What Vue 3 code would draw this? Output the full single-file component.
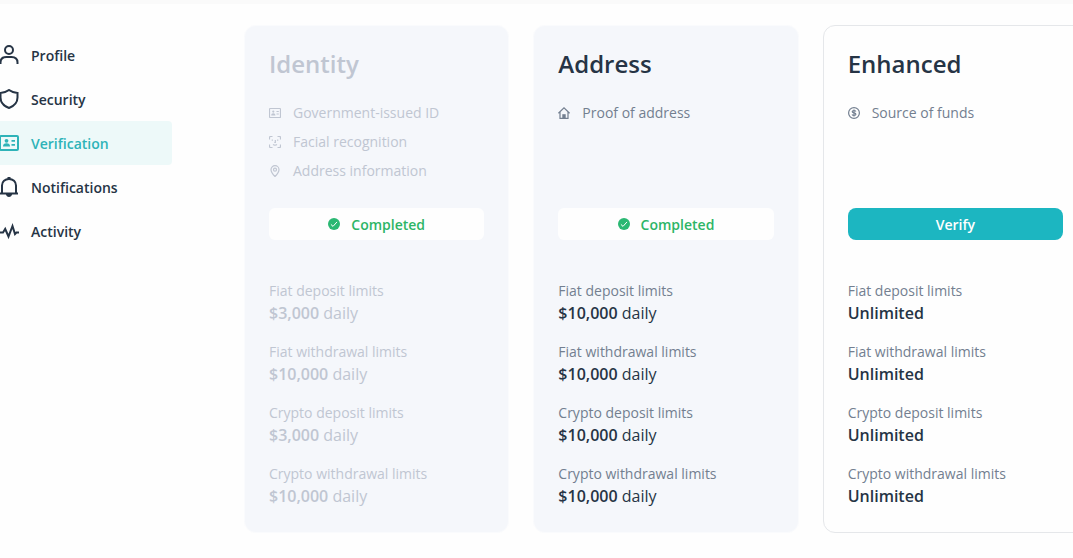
<script setup>
const navItems = [
  { label: 'Profile', icon: 'profile' },
  { label: 'Security', icon: 'shield' },
  { label: 'Verification', icon: 'idcard', active: true },
  { label: 'Notifications', icon: 'bell' },
  { label: 'Activity', icon: 'pulse' },
]

const limits = (values, suffix) => [
  { label: 'Fiat deposit limits', value: values[0], suffix },
  { label: 'Fiat withdrawal limits', value: values[1], suffix },
  { label: 'Crypto deposit limits', value: values[2], suffix },
  { label: 'Crypto withdrawal limits', value: values[3], suffix },
]

const tiers = [
  {
    name: 'Identity',
    state: 'muted',
    completed: true,
    features: [
      { label: 'Government-issued ID', icon: 'idcard' },
      { label: 'Facial recognition', icon: 'face' },
      { label: 'Address information', icon: 'pin' },
    ],
    limits: limits(['$3,000', '$10,000', '$3,000', '$10,000'], 'daily'),
  },
  {
    name: 'Address',
    state: 'current',
    completed: true,
    features: [{ label: 'Proof of address', icon: 'home' }],
    limits: limits(['$10,000', '$10,000', '$10,000', '$10,000'], 'daily'),
  },
  {
    name: 'Enhanced',
    state: 'open',
    completed: false,
    features: [{ label: 'Source of funds', icon: 'coin' }],
    limits: limits(['Unlimited', 'Unlimited', 'Unlimited', 'Unlimited'], ''),
  },
]
</script>

<template>
  <div class="page">
    <div class="topbar"></div>
    <div class="layout">
      <nav class="sidebar" aria-label="Account">
        <a
          v-for="item in navItems"
          :key="item.label"
          href="#"
          class="nav-link"
          :class="{ active: item.active }"
        >
          <svg class="nav-icon" viewBox="0 0 20 20" aria-hidden="true">
            <g v-if="item.icon === 'profile'">
              <circle cx="10" cy="5" r="4" />
              <path d="M1.500 19v-1.500c0-3.500 2.500-5.500 6-5.500h5c3.500 0 6 2 6 5.500V19" />
            </g>
            <path
              v-else-if="item.icon === 'shield'"
              d="M10 1C7.800 2.700 4.800 3.700 1.500 4v4.500c0 4.800 3.300 8.500 8.500 10.500 5.200-2 8.500-5.700 8.500-10.500V4C15.200 3.700 12.200 2.700 10 1z"
            />
            <g v-else-if="item.icon === 'idcard'">
              <rect x="1" y="3" width="18" height="14" rx="1" />
              <g class="solid">
                <circle cx="7.500" cy="7.800" r="1.900" />
                <path d="M4 13.500c0-2.300 1.300-3.300 3.500-3.300s3.500 1 3.500 3.300z" />
                <path d="M12.500 7h3.500v1.800h-3.500zM12.500 11h3.500v1.800h-3.500z" />
              </g>
            </g>
            <g v-else-if="item.icon === 'bell'">
              <path d="M1 16.500h18M3 16V8.500C3 4.700 6 2 10 2s7 2.700 7 6.500V16" />
              <path class="solid" d="M6.800 17h6.400c-.4 1.800-1.600 3-3.200 3s-2.800-1.200-3.200-3zM8.500 0h3v2h-3z" />
            </g>
            <path v-else d="M0 11.500h4l2.200-3.500 3.300 7.500 4-10.500 2.500 8 1.500-1.500H20" />
          </svg>
          <span>{{ item.label }}</span>
        </a>
      </nav>

      <main class="tiers">
        <section v-for="tier in tiers" :key="tier.name" class="card" :class="tier.state">
          <h2 class="title">{{ tier.name }}</h2>
          <ul class="features">
            <li v-for="feature in tier.features" :key="feature.label">
              <svg class="feature-icon" viewBox="0 0 12 12" aria-hidden="true">
                <g v-if="feature.icon === 'idcard'">
                  <rect x=".5" y="1.500" width="11" height="9" rx=".7" />
                  <g class="solid">
                    <circle cx="4.300" cy="4.600" r="1.100" />
                    <path d="M2.200 8.500c0-1.500.8-2.200 2.100-2.200s2.100.7 2.100 2.200zM7.500 4h2.300v1.100H7.500zM7.500 6.500h2.300v1.100H7.500z" />
                  </g>
                </g>
                <g v-else-if="feature.icon === 'face'">
                  <path d="M.5 3.500v-2a1 1 0 0 1 1-1h2M8.500.5h2a1 1 0 0 1 1 1v2M11.500 8.500v2a1 1 0 0 1-1 1h-2M3.500 11.500h-2a1 1 0 0 1-1-1v-2" />
                  <path d="M3.300 3.500v1.300M8.700 3.500v1.300M6.300 4v2.500H5.300M4 8.500c1.200.8 2.800.8 4 0" />
                </g>
                <g v-else-if="feature.icon === 'pin'">
                  <path d="M6 11.500C4 9.500 2 7.300 2 4.700a4 4 0 0 1 8 0c0 2.600-2 4.800-4 6.800z" />
                  <circle cx="6" cy="4.700" r="1.500" />
                </g>
                <g v-else-if="feature.icon === 'home'">
                  <path d="M.4 6.200 6 .9l5.600 5.300M2 5v6.400h8V5" />
                  <path class="solid" d="M4.300 11.500V7.200h3.400v4.300z" />
                </g>
                <g v-else>
                  <circle cx="6" cy="6" r="5.400" />
                  <path d="M7.900 4.500C7.500 3.800 6.800 3.500 6 3.500c-1 0-1.800.4-1.800 1.200 0 1.700 3.700.8 3.700 2.600 0 .8-.8 1.200-1.900 1.200-.9 0-1.600-.3-2-1M6 2.500v7" />
                </g>
              </svg>
              <span>{{ feature.label }}</span>
            </li>
          </ul>

          <div v-if="tier.completed" class="status">
            <svg class="check" viewBox="0 0 12 12" aria-hidden="true">
              <circle cx="6" cy="6" r="6" />
              <path d="M2.900 6.400 5 8.400l4-4.500" />
            </svg>
            <span>Completed</span>
          </div>
          <button v-else type="button" class="verify">Verify</button>

          <dl class="limits">
            <div v-for="limit in tier.limits" :key="limit.label">
              <dt>{{ limit.label }}</dt>
              <dd><strong>{{ limit.value }}</strong> {{ limit.suffix }}</dd>
            </div>
          </dl>
        </section>
      </main>
    </div>
  </div>
</template>

<style>
body {
  margin: 0;
  background: #fefefe;
}
</style>

<style scoped>
.page {
  min-height: 100vh;
  overflow: hidden;
  color: #263445;
  font-family: "Open Sans", "Noto Sans", sans-serif;
  font-size: 14px;
}

.topbar {
  height: 4px;
  background: #fafafa;
}

.layout {
  display: grid;
  grid-template-columns: 172px 1fr;
  gap: 72px;
  align-items: start;
  margin-right: -15px;
  padding-top: 21px;
}

.sidebar {
  display: flex;
  flex-direction: column;
  padding-top: 8px;
}

.nav-link {
  display: flex;
  align-items: center;
  gap: 12px;
  height: 44px;
  margin-left: -1px;
  border-radius: 0 4px 4px 0;
  color: #263445;
  font-weight: 600;
  text-decoration: none;
}

.nav-link.active {
  background: #edf9f9;
  color: #2eb3b8;
}

.nav-icon {
  flex: none;
  width: 20px;
  height: 20px;
  fill: none;
  stroke: currentColor;
  stroke-width: 2;
}

.solid {
  fill: currentColor;
  stroke: none;
}

.tiers {
  display: grid;
  grid-template-columns: repeat(3, 1fr);
  gap: 24px;
}

.card {
  padding: 24px;
  border: 1px solid #fafbfd;
  border-radius: 12px;
  background: #f5f7fb;
}

.card.open {
  border-color: #e5e7ea;
  background: #fefefe;
}

.title {
  margin: 0;
  font-size: 24px;
  font-weight: 600;
  line-height: 28px;
}

.features {
  display: flex;
  flex-direction: column;
  gap: 8px;
  min-height: 79px;
  margin: 24px 0 27px;
  padding: 0;
  color: #737f90;
  list-style: none;
}

.features li {
  display: flex;
  align-items: center;
  gap: 12px;
  line-height: 21px;
}

.feature-icon {
  width: 12px;
  height: 12px;
  fill: none;
  stroke: currentColor;
  stroke-width: 1.2;
}

.status,
.verify {
  display: flex;
  align-items: center;
  justify-content: center;
  gap: 11px;
  width: 100%;
  height: 32px;
  border: 0;
  border-radius: 6px;
  font: inherit;
  font-weight: 600;
}

.status {
  background: #fefefe;
  color: #2db566;
}

.verify {
  border-radius: 8px;
  background: #1cb6c1;
  color: #fff;
}

.check {
  width: 12px;
  height: 12px;
  fill: #2bb873;
}

.check path {
  fill: none;
  stroke: #fff;
}

.limits {
  display: flex;
  flex-direction: column;
  gap: 17px;
  margin: 41px 0 0;
}

.limits dt {
  color: #737f90;
  line-height: 20px;
}

.limits dd {
  margin: 0;
  font-size: 16px;
  line-height: 24px;
}

.limits strong {
  font-weight: 600;
}

.muted,
.muted .features,
.muted .limits dt {
  color: #c0c6d2;
}
</style>
